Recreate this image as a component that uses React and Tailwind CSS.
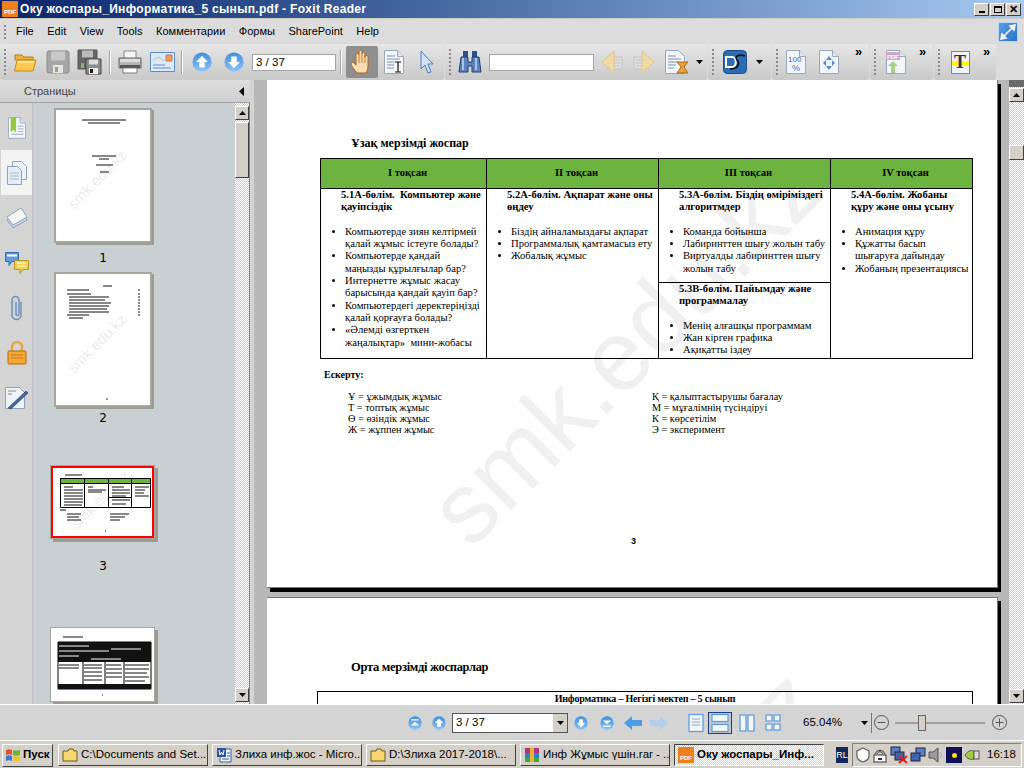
const ui = { fontFamily: '"Liberation Sans", Arial, sans-serif' };
const serif = { fontFamily: '"Liberation Serif", "Times New Roman", serif' };

const Folder = ({ size = 24 }) => (
    <svg width={size} height={size} viewBox="0 0 24 24">
        <path d="M2 5h7l2 2h9v3H2z" fill="#e9b23c" stroke="#b9821c" strokeWidth="1" />
        <path d="M1.5 21 L4 10h19l-3 11z" fill="#fbc94f" stroke="#c48a1e" strokeWidth="1" />
        <path d="M5 12h16" stroke="#ffe9a8" strokeWidth="1.5" />
    </svg>
);

const Floppy = ({ color = "#a6a6a6", dark = "#8a8a8a", size = 24 }) => (
    <svg width={size} height={size} viewBox="0 0 24 24">
        <path d="M1 3a2 2 0 0 1 2-2h18a2 2 0 0 1 2 2v18a2 2 0 0 1-2 2H3a2 2 0 0 1-2-2z" fill={color} stroke={dark} />
        <path d="M5 1.500h14v9H5z" fill="#c9c9c9" />
        <path d="M7 15h10v8H7z" fill="#e4e4e4" />
        <path d="M9 17h3v5H9z" fill="#86b56a" />
    </svg>
);

const SaveAll = () => (
    <svg width="26" height="26" viewBox="0 0 26 26">
        <path d="M1 1h19v19H1z" fill="#666" stroke="#555" />
        <path d="M5 1.500h11v7H5z" fill="#bbb" />
        <path d="M9 10h15v15H9z" fill="#8c8c8c" stroke="#444" />
        <path d="M12 10.500h9v5h-9z" fill="#ddd" />
        <path d="M12 19h9v6h-9z" fill="#eee" />
        <path d="M13 20h3v4h-3z" fill="#222" />
        <path d="M4 14h3v5H4z" fill="#86b56a" />
    </svg>
);

const Printer = () => (
    <svg width="24" height="24" viewBox="0 0 24 24">
        <path d="M6 1h12v8H6z" fill="#f5f5f5" stroke="#888" />
        <path d="M1 8h22v10H1z" fill="#b5b5b5" stroke="#666" />
        <path d="M2 9h20v3H2z" fill="#ddd" />
        <path d="M2 15h20v3H2z" fill="#555" />
        <path d="M5 18h14v5H5z" fill="#fff" stroke="#777" />
    </svg>
);

const MailDoc = () => (
    <svg width="25" height="20" viewBox="0 0 25 20">
        <path d="M.5.5h24v19H.5z" fill="#dfeaf8" stroke="#5a8ccc" />
        <path d="M16 3h6v6h-6z" fill="#f0a040" stroke="#b77" />
        <path d="M3 9c4-5 7-4 11 0" stroke="#9fbde0" fill="none" />
        <path d="M3 13h12M3 16h18" stroke="#5a8ccc" />
    </svg>
);

const Round = ({ dir = "up", size = 20, bar = false }) => (
    <svg width={size} height={size} viewBox="0 0 22 22">
        <defs>
            <linearGradient id="rnd" x1="0" y1="0" x2="0" y2="1">
                <stop offset="0" stopColor="#3f8fe0" />
                <stop offset="1" stopColor="#8cc4f5" />
            </linearGradient>
        </defs>
        <circle cx="11" cy="11" r="10.5" fill="url(#rnd)" />
        {dir === "up" && !bar && <path d="M11 4l6.500 7H14v6H8v-6H4.500z" fill="#fff" />}
        {dir === "down" && !bar && <path d="M11 18l6.500-7H14V5H8v6H4.500z" fill="#fff" />}
        {dir === "up" && bar && <path d="M5 5h12v2H5zM11 9l6.500 6h-13z" fill="#fff" />}
        {dir === "down" && bar && <path d="M5 15h12v2H5zM11 13l6.500-6h-13z" fill="#fff" />}
    </svg>
);

const Hand = () => (
    <svg width="24" height="26" viewBox="0 0 24 26">
        <path d="M7 24c-2-3-6-7-6-9 0-2 2-2 3-1l2 2V6c0-2 3-2 3 0V3c0-2 3-2 3 0v2c0-2 3-2 3 0v3c0-2 3-2 3 0v9c0 3-1 5-2 7z" fill="#fbdcb0" stroke="#b5641c" strokeWidth="1" />
        <path d="M9 6v8M12 5v9M15 6v8" stroke="#b5641c" strokeWidth=".8" />
    </svg>
);

const PageIcon = ({ children, w = 20, h = 24 }) => (
    <svg width={w} height={h} viewBox="0 0 20 24">
        <path d="M.5.5h13l6 6v17H.5z" fill="#f2f6fb" stroke="#9aa8bc" />
        <path d="M13.500.5v6h6" fill="#dfe6ef" stroke="#9aa8bc" />
        {children}
    </svg>
);

const TextDoc = () => (
    <PageIcon>
        <path d="M3 6h8M3 9h13M3 12h7M3 15h7M3 18h7" stroke="#7d92ad" />
        <path d="M11 12h6M11 22h6M14 12v10" stroke="#111" strokeWidth="1.2" />
    </PageIcon>
);

const Cursor = () => (
    <svg width="14" height="24" viewBox="0 0 14 24">
        <path d="M1 1l12 13H8l3 8-3 1-3-8-4 4z" fill="#cfe0f7" stroke="#4f7cc0" />
    </svg>
);

const Binoculars = () => (
    <svg width="24" height="24" viewBox="0 0 24 24">
        <path d="M5 1h5v6H5zM14 1h5v6h-5z" fill="#2f4f87" />
        <path d="M3 7h7v5h4V7h7l2 15h-9v-6h-4v6H1z" fill="#5d82bd" stroke="#24406f" />
        <path d="M5 8v12M18 8v12" stroke="#a9c3e8" strokeWidth="2" />
    </svg>
);

const ArrowPage = ({ flip }) => (
    <svg width="22" height="22" viewBox="0 0 22 22" className={flip ? "-scale-x-100" : ""}>
        <path d="M7 6h14v12H7z" fill="#dedede" stroke="#c4c4c4" />
        <path d="M9 9h10M9 12h10M9 15h10" stroke="#c2c2c2" />
        <path d="M13 0v22L1 11z" fill="#f1d9a6" stroke="#e0c48c" />
    </svg>
);

const Hourglass = () => (
    <svg width="24" height="24" viewBox="0 0 24 24">
        <path d="M.5.5h13l6 6v17H.5z" fill="#f2f6fb" stroke="#9aa8bc" />
        <path d="M3 6h8M3 9h13M3 12h10M3 15h8M3 18h6" stroke="#7d92ad" />
        <path d="M12 12h11l-4 5 4 6H12l4-6z" fill="#e8a23a" stroke="#a5691a" />
    </svg>
);

const DsLogo = () => (
    <svg width="24" height="24" viewBox="0 0 24 24">
        <rect x=".5" y=".5" width="23" height="23" rx="4" fill="#2a6cb5" stroke="#1c4a85" />
        <path d="M3 7h6c5 0 5 10 0 10H3z" fill="none" stroke="#fff" strokeWidth="2" />
        <path d="M22 6c-6-2-11 0-8 4 3 3 2 9-7 9" fill="none" stroke="#111" strokeWidth="1.6" />
    </svg>
);

const Caret = ({ color = "#000" }) => (
    <svg width="7" height="4" viewBox="0 0 7 4"><path d="M0 0h7L3.500 4z" fill={color} /></svg>
);

const Chevrons = () => <span className="block text-[13px] leading-[10px] font-bold text-black" style={ui}>»</span>;

const Grip = () => (
    <div className="flex flex-col gap-[2px] w-[2px]">
        {[0, 1, 2, 3, 4, 5, 6].map((i) => <span key={i} className="w-[2px] h-[2px] bg-[#8a8a8a]" />)}
    </div>
);

const Sep = () => <div className="w-px h-6 bg-[#a8a8a8] border-r border-white box-content" />;

const Cell = ({ w = 32, children }) => (
    <div className="flex items-center justify-center shrink-0" style={{ width: w }}>{children}</div>
);

const Group = ({ w, children }) => (
    <div className="h-9 shrink-0 flex items-center rounded-[3px] bg-gradient-to-b from-[#e6e6e6] to-[#c9c9c9] pl-[4px]" style={{ width: w }}>
        {children}
    </div>
);

const TitleBtn = ({ children }) => (
    <div className="w-[15px] h-[13px] bg-[#d4d0c8] border border-t-white border-l-white border-r-[#404040] border-b-[#404040] flex items-center justify-center">{children}</div>
);

const TitleBar = () => (
    <div className="h-[18px] flex items-center bg-gradient-to-r from-[#0a246a] to-[#a6caf0] pr-[3px]">
        <div className="w-[16px] h-[16px] ml-[2px] mr-[2px] bg-[#ee7f1a] text-white text-[6px] font-bold flex items-end justify-center" style={ui}>PDF</div>
        <span className="text-white text-[12px] font-bold grow tracking-[0.3px]" style={ui}>Оку жоспары_Информатика_5 сынып.pdf - Foxit Reader</span>
        <div className="flex gap-[1px]">
            <TitleBtn><span className="w-[6px] h-[2px] bg-black mt-[6px]" /></TitleBtn>
            <TitleBtn><span className="w-[8px] h-[7px] border border-black border-t-2" /></TitleBtn>
            <TitleBtn><span className="text-[11px] leading-none font-bold text-black" style={ui}>✕</span></TitleBtn>
        </div>
    </div>
);

const MenuBar = () => (
    <div className="h-[26px] flex items-center bg-[#dcdcdc] border-t border-[#d0ccc4] pl-[4px] relative">
        <div className="flex flex-col gap-[2px] w-[2px] mr-[10px]">
            {[0, 1, 2, 3].map((i) => <span key={i} className="w-[2px] h-[2px] bg-[#8a8a8a]" />)}
        </div>
        <div className="flex gap-[13.5px] text-[11px] text-black" style={ui}>
            <span>File</span><span>Edit</span><span>View</span><span>Tools</span><span>Комментарии</span><span>Формы</span><span>SharePoint</span><span>Help</span>
        </div>
        <div className="ml-auto mr-[6px] w-5 h-5 bg-gradient-to-br from-[#5aa0e6] to-[#2a74c8] border border-[#bcd6f0] flex items-center justify-center">
            <svg width="16" height="16" viewBox="0 0 16 16"><path d="M1 15l5-1-4-4zM15 1l-5 1 4 4zM4 12l8-8" fill="#fff" stroke="#fff" strokeWidth="1.5" /></svg>
        </div>
    </div>
);

const ToolBar = () => (
    <div className="h-9 flex items-center bg-[#dcdcdc] gap-[1px]">
        <Group w={444}>
            <Grip />
            <Cell w={38}><Folder /></Cell>
            <Cell w={28}><Floppy /></Cell>
            <Cell w={36}><SaveAll /></Cell>
            <Cell w={4}><Sep /></Cell>
            <Cell w={36}><Printer /></Cell>
            <Cell w={28}><MailDoc /></Cell>
            <Cell w={12}><Sep /></Cell>
            <Cell w={28}><Round /></Cell>
            <Cell w={36}><Round dir="down" /></Cell>
            <div className="w-[84px] h-[17px] shrink-0 bg-white border border-[#a5a5a5] text-[11.500px] leading-[15px] pl-[3px] text-black" style={ui}>3 / 37</div>
            <Cell w={10}><Sep /></Cell>
            <div className="w-[32px] h-[32px] shrink-0 bg-[#8f8f8f] rounded-[2px] flex items-center justify-center"><Hand /></div>
            <Cell w={32}><TextDoc /></Cell>
            <Cell w={34}><Cursor /></Cell>
        </Group>
        <Group w={262}>
            <Grip />
            <Cell w={38}><Binoculars /></Cell>
            <div className="w-[105px] h-[17px] shrink-0 bg-white border border-[#a5a5a5]" />
            <Cell w={36}><ArrowPage /></Cell>
            <Cell w={28}><ArrowPage flip /></Cell>
            <Cell w={38}><Hourglass /></Cell>
            <Caret />
        </Group>
        <Group w={63}>
            <Grip />
            <Cell w={42}><DsLogo /></Cell>
            <Caret />
        </Group>
        <Group w={97}>
            <Grip />
            <Cell w={36}><PageIcon><text x="2" y="12" fontSize="8" fill="#2e6fc0" style={ui}>100</text><text x="6" y="21" fontSize="9" fill="#2e6fc0" style={ui}>%</text></PageIcon></Cell>
            <Cell w={30}><PageIcon><path d="M10 6l3 4H7zM10 20l3-4H7zM4 13l3-3v6zM16 13l-3-3v6z" fill="#4a90e2" /></PageIcon></Cell>
            <div className="self-start mt-[3px] ml-[11px]"><Chevrons /></div>
        </Group>
        <Group w={63}>
            <Grip />
            <Cell w={40}><PageIcon><rect x="0" y="2" width="14" height="8" fill="#c9a7cf" /><text x="1" y="9" fontSize="6" fontWeight="700" fill="#fff" style={ui}>PDF</text><path d="M5 23v-7H2l5-5 5 5H9v7z" fill="#a9cf8a" /></PageIcon></Cell>
            <div className="self-start mt-[3px] ml-[3px]"><Chevrons /></div>
        </Group>
        <Group w={62}>
            <Grip />
            <Cell w={40}>
                <div className="w-[19px] h-[23px] bg-[#f0f4fa] border border-[#5a8ccc] relative flex items-center justify-center">
                    <span className="absolute left-0 right-0 top-[9px] h-[5px] bg-[#ffff00]" />
                    <span className="relative text-[18px] leading-none font-bold text-[#333]" style={serif}>T</span>
                </div>
            </Cell>
            <div className="self-start mt-[3px] ml-[3px]"><Chevrons /></div>
        </Group>
    </div>
);

const RailBtn = ({ active, children }) => (
    <div className={`h-[45px] flex items-center justify-center ${active ? "bg-[#f3f3f3]" : ""}`}>{children}</div>
);

const Rail = () => (
    <div className="w-[33px] shrink-0 grow bg-[#d4d4d4] border-r border-[#c0c0c0] pt-[2px] pl-px">
        <RailBtn>
            <PageIcon w={18} h={22}><path d="M3 0h6v17l-3-3-3 3z" fill="#93c840" /><path d="M11 10h6M11 13h6M11 16h6M4 19h13" stroke="#9aa8bc" /></PageIcon>
        </RailBtn>
        <RailBtn active>
            <svg width="20" height="24" viewBox="0 0 20 24">
                <path d="M5.500.5h9l5 5v13h-14z" fill="#eef3fa" stroke="#8fa0b8" />
                <path d="M.5 5.500h10l4 4v14h-14z" fill="#e4edf8" stroke="#8fa0b8" />
                <path d="M3 12h9M3 15h9M3 18h9" stroke="#a9b8cc" />
            </svg>
        </RailBtn>
        <RailBtn>
            <svg width="22" height="24" viewBox="0 0 22 24">
                <path d="M1 14L15 5l6 9-14 8z" fill="#c9d5e6" stroke="#8fa0b8" />
                <path d="M1 11L15 2l6 9-14 8z" fill="#f5f5f5" stroke="#8fa0b8" />
            </svg>
        </RailBtn>
        <RailBtn>
            <svg width="24" height="22" viewBox="0 0 24 22">
                <path d="M.5.5h13v9H7l-3 4V9.500H.5z" fill="#5b9be8" stroke="#2f6cb8" />
                <path d="M2 2.500h10v2H2z" fill="#fff" />
                <path d="M9.500 8.500h14v9H18l-3 4v-4H9.500z" fill="#f2d253" stroke="#b8962a" />
                <path d="M12 11h9M12 14h9" stroke="#fff" />
            </svg>
        </RailBtn>
        <RailBtn>
            <svg width="14" height="26" viewBox="0 0 14 26">
                <path d="M11 7v13a4.500 4.500 0 0 1-9 0V5a3.500 3.500 0 0 1 7 0v14a1.500 1.500 0 0 1-3 0V7" fill="none" stroke="#6f93bb" strokeWidth="1.5" />
            </svg>
        </RailBtn>
        <RailBtn>
            <svg width="20" height="24" viewBox="0 0 20 24">
                <path d="M5 10V6a5 5 0 0 1 10 0v4" fill="none" stroke="#e3a93f" strokeWidth="2.500" />
                <rect x="1" y="10" width="18" height="13" rx="1" fill="#f3a735" stroke="#b56a14" />
                <path d="M4 14h12M4 17h12" stroke="#c8781c" />
            </svg>
        </RailBtn>
        <RailBtn>
            <svg width="24" height="24" viewBox="0 0 24 24">
                <path d="M.5 1.500h14l5 5v16H.5z" fill="#eef3fa" stroke="#8fa0b8" />
                <path d="M3 5h8M3 8h4" stroke="#888" />
                <path d="M3 22L21 5l2 2L6 23z" fill="#3a68a8" stroke="#222" strokeWidth=".5" />
            </svg>
        </RailBtn>
    </div>
);

const Lines = ({ rows }) => rows.map(([x, y, w, c = "#111"], i) => <path key={i} d={`M${x} ${y}h${w}`} stroke={c} strokeWidth="1" />);

const ThumbWm = ({ x = 16, y = 72 }) => (
    <text x={x} y={y} fontSize="15" fill="#ececec" transform={`rotate(-45 ${x} ${y})`} style={ui}>smk.edu.kz</text>
);

const Thumb1 = () => (
    <svg width="94" height="131" viewBox="0 0 94 131" className="block bg-white">
        <ThumbWm x={18} y={100} />
        <Lines rows={[[26, 10, 44], [32, 13, 32], [36, 46, 24], [43, 49, 10], [40, 55, 17], [44, 62, 9]]} />
    </svg>
);

const Thumb2 = () => (
    <svg width="94" height="131" viewBox="0 0 94 131" className="block bg-white">
        <ThumbWm x={18} y={100} />
        <Lines rows={[[47, 12, 9], [11, 16, 22], [11, 20, 24], [13, 23, 40], [13, 26, 36], [13, 29, 42], [13, 32, 40], [13, 35, 38], [13, 38, 40], [11, 41, 22], [13, 44, 14], [82, 16, 2], [82, 20, 2], [82, 23, 2], [82, 26, 2], [82, 29, 2], [82, 32, 2], [82, 35, 2], [82, 38, 2], [82, 41, 2], [50, 125, 2, "#333"]]} />
    </svg>
);

const Thumb3 = () => (
    <svg width="99" height="68" viewBox="0 0 99 68" className="block bg-white">
        <ThumbWm x={24} y={62} />
        <Lines rows={[[12, 7, 17]]} />
        <rect x="7" y="10" width="91" height="5" fill="#6db33f" />
        <path d="M7.500 10.500h90v29h-90zM31.500 10.500v29M55.500 10.500v29M78.500 10.500v29M7.500 15.500h90M55.500 29.500h23" fill="none" stroke="#000" />
        <Lines rows={[[11, 19, 9], [11, 22, 19], [11, 25, 19], [11, 28, 19], [11, 31, 19], [11, 34, 19], [11, 37, 18], [35, 19, 5], [35, 22, 18], [35, 24, 14], [59, 19, 12], [59, 22, 18], [59, 25, 18], [59, 28, 14], [59, 32, 18], [59, 36, 14], [82, 19, 14], [82, 22, 10], [82, 25, 9], [82, 28, 14], [7, 42, 6], [14, 46, 14], [14, 49, 12], [14, 52, 14], [57, 46, 19], [57, 49, 15], [57, 52, 10], [52, 63, 1, "#111"]]} />
    </svg>
);

const Thumb4 = () => (
    <svg width="103" height="73" viewBox="0 0 103 73" className="block bg-white">
        <Lines rows={[[12, 9, 20]]} />
        <path d="M7 14h93v47H7z" fill="#fff" stroke="#000" />
        <rect x="7" y="14" width="93" height="20" fill="#111" />
        <Lines rows={[[8, 18, 30, "#fff"], [8, 23, 50, "#fff"], [8, 28, 20, "#fff"], [60, 21, 30, "#fff"], [40, 31, 30, "#fff"]]} />
        <path d="M32 34v22M54 34v22M73 34v22" stroke="#000" />
        <Lines rows={[[8, 37, 20], [8, 40, 20], [33, 37, 18], [33, 40, 18], [33, 44, 18], [33, 48, 18], [33, 52, 18], [55, 37, 15], [55, 41, 16], [55, 45, 16], [55, 49, 16], [74, 37, 24], [74, 41, 24], [74, 45, 22], [74, 49, 24], [74, 53, 20]]} />
        <rect x="7" y="56" width="93" height="5" fill="#111" />
        <Lines rows={[[51, 67, 1]]} />
    </svg>
);

const Checker = "bg-[repeating-conic-gradient(#cfcfcf_0_25%,#ffffff_0_50%)] bg-[length:2px_2px]";

const ScrollBtn = () => (
    <div className="w-[14px] h-[14px] bg-[#d4d0c8] border border-t-white border-l-white border-r-[#404040] border-b-[#404040] flex items-center justify-center shrink-0">
        <Caret />
    </div>
);

const PanelScroll = () => (
    <div className={`w-[15px] shrink-0 ${Checker} flex flex-col justify-between border-r border-[#808080] pt-[3px] pb-[2px]`}>
        <div>
            <div className="w-[14px] h-[14px] bg-[#d4d0c8] border border-t-white border-l-white border-r-[#404040] border-b-[#404040] flex items-center justify-center">
                <span className="rotate-180 flex"><Caret /></span>
            </div>
            <div className="w-[14px] h-[56px] mt-[2px] bg-[#d4d0c8] border border-t-white border-l-white border-r-[#404040] border-b-[#404040]" />
        </div>
        <ScrollBtn />
    </div>
);

const ThumbPanel = () => (
    <div className="flex-1 flex flex-col min-w-0">
        <div className="h-[23px] shrink-0 flex items-center bg-gradient-to-b from-[#dedede] to-[#cfcfcf] border-b border-[#a0a0a0] relative z-10 w-[250px] -ml-[33px] pl-[24px]">
            <span className="text-[11px] text-[#444]" style={ui}>Страницы</span>
            <svg width="5" height="9" viewBox="0 0 5 9" className="ml-auto mr-[6px]"><path d="M5 0v9L0 4.500z" fill="#000" /></svg>
        </div>
        <div className="flex-1 flex bg-[#c8d0d3] min-h-0">
            <div className="flex-1 flex flex-col items-center overflow-hidden pt-[5px] pr-[66px] text-black" style={{ fontFamily: '"DejaVu Sans", sans-serif' }}>
                <div className="ml-[3px] border-2 border-[#a6a69e] shadow-[2px_2px_0_#9c9c94]"><Thumb1 /></div>
                <div className="ml-[4px] h-[29px] flex items-center leading-none text-[12px]">1</div>
                <div className="ml-[3px] border-2 border-[#a6a69e] shadow-[2px_2px_0_#9c9c94]"><Thumb2 /></div>
                <div className="ml-[4px] h-[58px] pt-[1px] text-[12px] leading-[20px]">2</div>
                <div className="ml-[3px] border border-[#a6a69e] shadow-[3px_3px_0_#9c9c94]"><div className="border-2 border-[#ff0000]"><Thumb3 /></div></div>
                <div className="ml-[4px] h-[88px] pt-[17px] text-[12px] leading-[20px]">3</div>
                <div className="ml-[3px] border border-[#a6a69e] shadow-[3px_3px_0_#9c9c94] shrink-0"><Thumb4 /></div>
            </div>
            <PanelScroll />
        </div>
    </div>
);

const Watermark = () => (
    <div className="absolute left-[105px] top-[217px] text-[100px] leading-none whitespace-nowrap -rotate-45 text-[#f0f0f0] select-none" style={ui}>smk.edu.kz</div>
);

// lines are broken by hand, the source pdf has fixed breaks
const List = ({ items }) => (
    <ul className="list-disc pl-[4px] mt-[12.3px] whitespace-pre">
        {items.map((t) => <li key={t}>{t}</li>)}
    </ul>
);

const Head = ({ children }) => <p className="font-bold whitespace-pre">{children}</p>;

const PlanTable = () => (
    <div className="ml-[53px] w-[653px] border border-black text-[10.600px] leading-[12.3px] text-black">
        <div className="grid grid-cols-[166px_172px_172px_141px] h-[30px] bg-[#6db33f] border-b border-black font-bold text-center text-[10.500px] items-center">
            <div className="h-full flex items-center justify-center border-r border-black pl-2">I тоқсан</div>
            <div className="h-full flex items-center justify-center border-r border-black pl-2">II тоқсан</div>
            <div className="h-full flex items-center justify-center border-r border-black pl-2">III тоқсан</div>
            <div className="h-full flex items-center justify-center pl-2">IV тоқсан</div>
        </div>
        <div className="grid grid-cols-[166px_172px_172px_141px] h-[169px]">
            <div className="border-r border-black pl-[20px]">
                <Head>{"5.1А-бөлім.  Компьютер және\nқауіпсіздік"}</Head>
                <List items={["Компьютерде зиян келтірмей\nқалай жұмыс істеуге болады?", "Компьютерде қандай\nмаңызды құрылғылар бар?", "Интернетте жұмыс жасау\nбарысында қандай қауіп бар?", "Компьютердегі деректеріңізді\nқалай қорғауға болады?", "«Әлемді өзгерткен\nжаңалықтар»  мини-жобасы"]} />
            </div>
            <div className="border-r border-black pl-[20px]">
                <Head>{"5.2А-бөлім. Ақпарат және оны\nөңдеу"}</Head>
                <List items={["Біздің айналамыздағы ақпарат", "Программалық қамтамасыз ету", "Жобалық жұмыс"]} />
            </div>
            <div className="border-r border-black flex flex-col">
                <div className="h-[94px] border-b border-black pl-[20px]">
                    <Head>{"5.3А-бөлім. Біздің өміріміздегі\nалгоритмдер"}</Head>
                    <List items={["Команда бойынша", "Лабиринттен шығу жолын табу", "Виртуалды лабиринттен шығу\nжолын табу"]} />
                </div>
                <div className="pl-[20px]">
                    <Head>{"5.3В-бөлім. Пайымдау және\nпрограммалау"}</Head>
                    <List items={["Менің алғашқы программам", "Жан кірген графика", "Ақиқатты іздеу"]} />
                </div>
            </div>
            <div className="pl-[20px]">
                <Head>{"5.4А-бөлім. Жобаны\nқұру және оны ұсыну"}</Head>
                <List items={["Анимация құру", "Құжатты басып\nшығаруға дайындау", "Жобаның презентациясы"]} />
            </div>
        </div>
    </div>
);

const Notes = () => (
    <div className="text-[10.300px] leading-[11px] text-black">
        <p className="ml-[57px] mt-[10px] font-bold text-[10px]">Ескерту:</p>
        <div className="grid grid-cols-[304px_1fr] ml-[81px] mt-[11px]">
            <div>
                <p>Ұ = ұжымдық жұмыс</p>
                <p>Т = топтық жұмыс</p>
                <p>Ө = өзіндік жұмыс</p>
                <p>Ж = жұппен жұмыс</p>
            </div>
            <div>
                <p>Қ = қалыптастырушы бағалау</p>
                <p>М = мұғалімнің түсіндіруі</p>
                <p>К = көрсетілім</p>
                <p>Э = эксперимент</p>
            </div>
        </div>
    </div>
);

const DocView = () => (
    <div className="flex-1 min-w-0 bg-[#b8b8b8] overflow-hidden pl-px">
        <div className="relative w-[731px] h-[508px] bg-white shadow-[3px_4px_0_#000] border-b border-r border-[#777] pt-[55px]" style={serif}>
            <div className="absolute inset-0 overflow-hidden"><Watermark /></div>
            <div className="relative">
                <h2 className="ml-[84px] text-[12px] leading-4 font-bold text-black">Ұзақ мерзімді жоспар</h2>
                <div className="mt-[7px]"><PlanTable /></div>
                <Notes />
                <p className="mt-[100px] ml-[364px] text-[9px] font-bold text-black" style={ui}>3</p>
            </div>
        </div>
        <div className="relative w-[731px] h-[300px] mt-[9px] bg-white shadow-[3px_4px_0_#000] border-t border-r border-[#777] pt-[61px]" style={serif}>
            <div className="absolute inset-0 overflow-hidden"><Watermark /></div>
            <div className="relative">
                <h2 className="ml-[84px] text-[12.500px] leading-4 font-bold text-black tracking-[-0.3px]">Орта мерзімді жоспарлар</h2>
                <div className="ml-[50px] mt-[16px] w-[656px] h-[60px] border border-black text-center text-[10px] font-bold leading-[13px] text-black tracking-[-0.2px]">Информатика – Негізгі мектеп – 5 сынып</div>
            </div>
        </div>
    </div>
);

const DocScroll = () => (
    <div className="w-[17px] shrink-0 flex flex-col border-l border-[#b8b8b8] bg-[#b8b8b8] pl-px">
        <div className="h-[7px] bg-[#6a6a6a]" />
        <div className={`flex-1 ${Checker} flex flex-col pb-[1px]`}>
            <div className="w-[15px] h-[14px] mt-px bg-[#d4d0c8] border border-t-white border-l-white border-r-[#404040] border-b-[#404040] flex items-center justify-center">
                <span className="rotate-180 flex"><Caret /></span>
            </div>
            <div className="w-[15px] h-[15px] mt-[43px] bg-[#d4d0c8] border border-t-white border-l-white border-r-[#404040] border-b-[#404040]" />
            <div className="mt-auto w-[15px] h-[14px] bg-[#d4d0c8] border border-t-white border-l-white border-r-[#404040] border-b-[#404040] flex items-center justify-center"><Caret /></div>
        </div>
    </div>
);

const ViewIcon = ({ children }) => <svg width="22" height="22" viewBox="0 0 22 22">{children}</svg>;
const sheet = { fill: "#f3f7fc", stroke: "#5a9ae0", strokeWidth: 1.2 };

const NavArrow = ({ flip, pale }) => (
    <svg width="18" height="14" viewBox="0 0 18 14" className={flip ? "-scale-x-100" : ""}>
        <path d="M0 7l8-7v4h10v6H8v4z" fill={pale ? "#b5cfe8" : "#4f9be6"} />
    </svg>
);

const NavBar = () => (
    <div className="h-9 shrink-0 bg-[#d4d4d4] border-t border-white flex items-center pl-[403px]">
        <Cell w={24}><Round bar size={14} /></Cell>
        <Cell w={24}><Round size={14} /></Cell>
        <div className="w-[116px] h-[20px] bg-white border border-[#555] flex items-center justify-between text-[11.500px] text-black ml-[1px]" style={ui}>
            <span className="pl-[3px]">3 / 37</span>
            <span className="w-[14px] h-full bg-[#d4d0c8] flex items-center justify-center"><Caret /></span>
        </div>
        <Cell w={26}><Round dir="down" size={14} /></Cell>
        <Cell w={26}><Round dir="down" bar size={14} /></Cell>
        <Cell w={26}><NavArrow /></Cell>
        <Cell w={26}><NavArrow flip pale /></Cell>
        <div className="ml-[12px]"><Cell w={24}><ViewIcon><rect x="4" y="2.500" width="14" height="17" {...sheet} /><path d="M7 7h8M7 10h8M7 13h8" stroke="#8aa8cc" /></ViewIcon></Cell></div>
        <div className="w-6 h-[22px] border border-[#1c3f7a] bg-[#c0c8d0] flex items-center justify-center">
            <ViewIcon><rect x="3" y="2.500" width="16" height="7" {...sheet} /><rect x="3" y="12.500" width="16" height="7" {...sheet} /></ViewIcon>
        </div>
        <Cell w={30}><ViewIcon><rect x="4" y="3" width="6" height="16" {...sheet} /><rect x="12" y="3" width="6" height="16" {...sheet} /></ViewIcon></Cell>
        <Cell w={22}><ViewIcon><rect x="4" y="3" width="6" height="6" {...sheet} /><rect x="12" y="3" width="6" height="6" {...sheet} /><rect x="4" y="12" width="6" height="6" {...sheet} /><rect x="12" y="12" width="6" height="6" {...sheet} /></ViewIcon></Cell>
        <span className="ml-[19px] w-[58px] text-[11.500px] text-black" style={ui}>65.04%</span>
        <Caret />
        <span className="w-px h-5 bg-[#777] ml-[3px] mr-[2px]" />
        <svg width="15" height="15" viewBox="0 0 15 15"><circle cx="7.500" cy="7.500" r="7" fill="none" stroke="#555" /><path d="M3.500 7.500h8" stroke="#555" /></svg>
        <div className="relative w-[90px] h-[2px] bg-[#a0a0a0] ml-[6px] mr-[7px]">
            <span className="absolute left-[23px] -top-[7px] w-[8px] h-[16px] bg-[#d8d0c4] border border-[#666]" />
        </div>
        <svg width="15" height="15" viewBox="0 0 15 15"><circle cx="7.500" cy="7.500" r="7" fill="none" stroke="#555" /><path d="M3.500 7.500h8M7.500 3.500v8" stroke="#555" /></svg>
    </div>
);

const TaskBtn = ({ icon, label, active }) => (
    <div className={`w-[150px] h-[22px] flex items-center gap-[3px] pl-[3px] text-[11.500px] text-black whitespace-nowrap overflow-hidden border ${active ? "font-bold border-t-[#404040] border-l-[#404040] border-r-white border-b-white bg-[repeating-conic-gradient(#d4d0c8_0_25%,#ffffff_0_50%)] bg-[length:2px_2px]" : "bg-[#d4d0c8] border-t-white border-l-white border-r-[#404040] border-b-[#404040]"}`} style={ui}>
        {icon}
        <span>{label}</span>
    </div>
);

const FolderSm = () => (
    <svg width="16" height="14" viewBox="0 0 16 14" className="shrink-0"><path d="M1 3h5l1-2h4l1 2h3v10H1z" fill="#f7d66d" stroke="#6b5a1c" /></svg>
);
const WordSm = () => (
    <svg width="16" height="16" viewBox="0 0 16 16" className="shrink-0"><path d="M4 2h11v13H4z" fill="#eef3fb" stroke="#3a5fa8" /><path d="M1 1h9v9H1z" fill="#2c55a8" /><path d="M3 3l1 5 1.500-3L7 8l1-5" stroke="#fff" fill="none" /><path d="M6 12h7M11 6h3M11 9h3" stroke="#3a5fa8" /></svg>
);
const RarSm = () => (
    <svg width="16" height="16" viewBox="0 0 16 16" className="shrink-0"><rect x="1" y="1" width="14" height="5" fill="#b5307a" /><rect x="1" y="6" width="14" height="5" fill="#2f7fd0" /><rect x="1" y="11" width="14" height="4" fill="#3aa83a" /><rect x="6" y="1" width="4" height="14" fill="#e8b23a" /></svg>
);
const FoxitSm = () => (
    <div className="w-[16px] h-[16px] shrink-0 bg-[#ee7f1a] text-white text-[6px] font-bold flex items-end justify-center">PDF</div>
);

const Tray = () => (
    <div className="w-[170px] h-[24px] flex items-center gap-[2px] pl-[3px] border border-t-[#808080] border-l-[#808080] border-r-white border-b-white">
        <svg width="14" height="16" viewBox="0 0 14 16"><path d="M7 1l6 3v5c0 3-3 5-6 6-3-1-6-3-6-6V4z" fill="#fff" stroke="#666" strokeWidth="1.300" /></svg>
        <svg width="16" height="18" viewBox="0 0 16 18"><path d="M3 8c2-5 8-5 10 0M5 8c1-3 5-3 6 0" fill="none" stroke="#333" /><rect x="2" y="9" width="12" height="7" fill="#fff" stroke="#333" /><rect x="6" y="12" width="4" height="2" fill="#333" /></svg>
        <svg width="18" height="18" viewBox="0 0 18 18"><rect x="1" y="1" width="9" height="8" fill="#5a7fc8" stroke="#223" /><rect x="5" y="6" width="9" height="8" fill="#3f64b0" stroke="#223" /><path d="M9 10l8 7M17 10l-8 7" stroke="#e02020" strokeWidth="2" /></svg>
        <svg width="16" height="16" viewBox="0 0 16 16"><rect x="6" y="1" width="9" height="8" fill="#5a7fc8" stroke="#223" /><rect x="1" y="6" width="9" height="8" fill="#3f64b0" stroke="#223" /></svg>
        <svg width="16" height="16" viewBox="0 0 16 16"><path d="M1 5h4l5-4v14l-5-4H1z" fill="#9a9a9a" stroke="#555" /><path d="M12 5c2 2 2 4 0 6" fill="none" stroke="#9ab" /></svg>
        <div className="w-[16px] h-[16px] bg-[#10105a] flex items-center justify-center"><span className="w-[5px] h-[5px] rounded-full bg-[#ffe000]" /></div>
        <svg width="16" height="12" viewBox="0 0 16 12"><path d="M1 6c3-5 8-5 9-4v8C7 11 3 10 1 6z" fill="#a0cc40" stroke="#555" /><rect x="10" y="2" width="5" height="8" fill="#ddd" stroke="#555" /></svg>
        <span className="ml-[5px] text-[11.500px] text-black" style={ui}>16:18</span>
    </div>
);

const TaskBar = () => (
    <div className="h-7 shrink-0 bg-[#d4d0c8] border-t border-white flex items-center pl-[2px] pt-px">
        <div className="w-[51px] h-[23px] mr-[5px] flex items-center gap-[2px] pl-[2px] bg-[#d4d0c8] border border-t-white border-l-white border-r-[#404040] border-b-[#404040]">
            <svg width="16" height="16" viewBox="0 0 16 16" className="shrink-0">
                <path d="M1 3c2-1 4-1 6 0v5c-2-1-4-1-6 0z" fill="#e0532a" />
                <path d="M8 3c2 1 4 1 7 0v5c-3 1-5 1-7 0z" fill="#6ab52e" />
                <path d="M1 9c2-1 4-1 6 0v5c-2-1-4-1-6 0z" fill="#3b79d8" />
                <path d="M8 9c2 1 4 1 7 0v5c-3 1-5 1-7 0z" fill="#f2c21e" />
            </svg>
            <span className="text-[11.500px] font-bold text-black" style={ui}>Пуск</span>
        </div>
        <div className="flex gap-[4px]">
            <TaskBtn icon={<FolderSm />} label="C:\Documents and Set..." />
            <TaskBtn icon={<WordSm />} label="Злиха инф.жос - Micro..." />
            <TaskBtn icon={<FolderSm />} label="D:\Злиха 2017-2018\..." />
            <TaskBtn icon={<RarSm />} label="Инф Жұмыс үшін.rar - ..." />
            <TaskBtn icon={<FoxitSm />} label="Оку жоспары_Инф..." active />
        </div>
        <div className="ml-[12px] w-[12px] h-[16px] bg-[#10285a] text-white text-[9px] leading-[16px] text-center overflow-hidden" style={ui}>RL</div>
        <div className="ml-[4px]"><Tray /></div>
    </div>
);

const App = () => (
    <div className="w-[1024px] h-[768px] flex flex-col overflow-hidden bg-[#d4d4d4]">
        <TitleBar />
        <MenuBar />
        <ToolBar />
        <div className="flex-1 flex min-h-0">
            <div className="w-[250px] shrink-0 flex">
                <div className="flex flex-col pt-[23px]"><Rail /></div>
                <ThumbPanel />
            </div>
            <div className="w-[16px] shrink-0 bg-[#b8b8b8] border-l-4 border-[#d4d4d4]" />
            <DocView />
            <DocScroll />
        </div>
        <NavBar />
        <TaskBar />
    </div>
);

export default App;
